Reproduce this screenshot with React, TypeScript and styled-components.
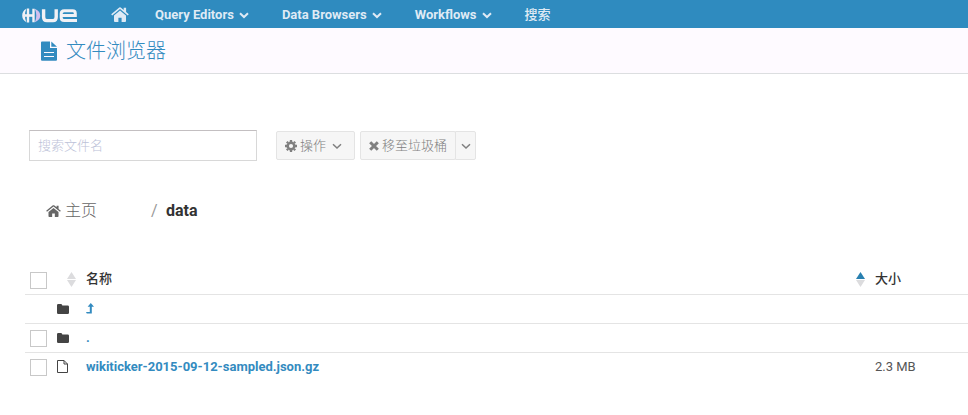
import React from "react";
import styled, { createGlobalStyle } from "styled-components";

const GlobalStyle = createGlobalStyle`
  *, *::before, *::after { box-sizing: border-box; }
  body {
    margin: 0;
    background: #fff;
    color: #333;
    font: 13px/20px Roboto, "Noto Sans CJK SC", sans-serif;
  }
  a { color: #338bc0; text-decoration: none; }
`;

const Navbar = styled.nav`
  display: flex;
  align-items: center;
  height: 28px;
  padding-left: 22px;
  background: #2f8bbf;
`;

const Brand = styled.a`
  display: flex;
  margin: 2px 33px 0 0;
`;

const HomeLink = styled.a`
  && { color: #dfeaf5; }
  display: flex;
  margin-right: 26px;
`;

const NavButton = styled.button`
  display: flex;
  align-items: center;
  gap: 5px;
  margin: 2px 33px 0 0;
  padding: 0;
  border: 0;
  background: none;
  color: #dfeaf5;
  font: 700 13px/20px Roboto, sans-serif;
`;

const NavLink = styled.a`
  && { color: #dfeaf5; }
  margin-top: 2px;
  font-size: 13px;
  font-weight: 500;
`;

const TitleBar = styled.header`
  display: flex;
  align-items: center;
  gap: 9px;
  height: 46px;
  padding-left: 41px;
  border-bottom: 1px solid #dcdee0;
  background: #fefaff;
  color: #338bc0;
`;

const Title = styled.h1`
  margin: 0;
  font-size: 20px;
  font-weight: 300;
  line-height: 28px;
`;

const Toolbar = styled.div`
  display: flex;
  align-items: center;
  padding: 56px 29px 0;
`;

const SearchInput = styled.input`
  width: 228px;
  height: 31px;
  margin-right: 19px;
  padding: 0 8px;
  border: 1px solid #d8d8d8;
  border-top-color: #c3bfc1;
  border-radius: 0;
  background: #fff;
  font: 300 13px/20px Roboto, "Noto Sans CJK SC", sans-serif;
  &::placeholder { color: #bcc2d8; opacity: 1; }
`;

const ToolButton = styled.button<{ $caret?: boolean }>`
  display: flex;
  align-items: center;
  gap: 3px;
  height: 29px;
  padding: ${(p) => (p.$caret ? "0 4px 0 5px" : "0 8px")};
  border: 1px solid #e4e4e4;
  border-radius: ${(p) => (p.$caret ? "0 2px 2px 0" : "2px")};
  background: #f6f6f6;
  color: #808080;
  font: 300 13px/18px Roboto, "Noto Sans CJK SC", sans-serif;
`;

const ActionLabel = styled.span`
  margin-right: 3px;
`;

const MenuButton = styled(ToolButton)`
  padding-right: 12px;
`;

const SplitButton = styled.div`
  display: flex;
  margin-left: 5px;
  & > button + button { margin-left: -1px; }
`;

const Breadcrumb = styled.nav`
  display: flex;
  align-items: center;
  height: 24px;
  margin: 38px 0 0 46px;
  font-size: 16px;
`;

const CrumbHome = styled.a`
  && { color: #666; }
  display: flex;
  align-items: center;
  gap: 4px;
  width: 105px;
  font-weight: 300;
`;

const Slash = styled.span`
  width: 15px;
  color: #999;
`;

const Current = styled.strong`
  color: #333;
  font-weight: 700;
`;

const FileTable = styled.table`
  width: calc(100% - 25px);
  margin: 42px 0 0 25px;
  border-collapse: collapse;
  table-layout: fixed;
  & th, & td {
    height: 29px;
    padding: 0 5px;
    text-align: left;
    vertical-align: middle;
    line-height: 20px;
  }
  & th { font-weight: 500; color: #333; }
  & td { border-top: 1px solid #e4e4e4; color: #555; }
  & svg { display: block; }
`;

const Col = styled.col<{ $w?: number }>`
  width: ${(p) => (p.$w ? `${p.$w}px` : "auto")};
`;

const Check = styled.input`
  display: block;
  appearance: none;
  width: 17px;
  height: 17px;
  margin: 2px 0 0;
  border: 1px solid #c8c8c8;
  background: #fff;
`;

const SortHead = styled.div`
  display: flex;
  align-items: center;
  justify-content: space-between;
`;

const IconSlot = styled.div`
  display: flex;
  justify-content: flex-end;
`;

const FileLink = styled.a`
  font-weight: 700;
`;

const Chevron = ({ weight = 2 }: { weight?: number }) => (
  <svg width="10" height="10" viewBox="0 0 10 10" fill="none" stroke="currentColor" strokeWidth={weight} aria-hidden="true">
    <path d="M1 3.2 5 7 9 3.2" />
  </svg>
);

const HomeIcon = ({ width, height }: { width: number; height: number }) => (
  <svg width={width} height={height} viewBox="0 0 18 15" preserveAspectRatio="none" fill="currentColor" aria-hidden="true">
    <path d="M9 3.6 15 8.6V14.1Q15 15 14.1 15H10.6V10.7H7.4V15H3.9Q3 15 3 14.1V8.6Z" />
    <path d="M8.3.4Q9 0 9.7.4L12.7 2.9V.8H15.1V4.9L17.8 7.2 16.8 8.4 9 2 1.2 8.4.2 7.2Z" />
  </svg>
);

const Logo = () => (
  <svg width="56" height="15" viewBox="0 0 56 15" fill="none" role="img" aria-label="Hue">
    <path d="M4.4.8C1.3 2.5.2 4.7.2 7.5S1.3 12.5 4.4 14.2Q2.9 11 2.9 7.5T4.4.8Z" fill="#f1f1f5" />
    <path d="M3 7.5H12" stroke="#f1f1f5" strokeWidth="2.6" />
    <path d="M6 .6V14.4M11.5 .8V14.2" stroke="#f1f1f5" strokeWidth="2.4" />
    <path d="M12.8.8C16.8 2.6 18.2 4.7 18.2 7.5S16.8 12.6 12.8 14.2Q14.3 11 14.3 7.5T12.8.8Z" fill="#d1bfee" />
    <path d="M21.6 1.2V9Q21.6 12.6 24.8 12.6H31Q34.2 12.6 34.2 9V1.2" stroke="#f1f1f5" strokeWidth="3.4" />
    <path d="M39.5 7.5H53.3V5.5Q53.3 2.8 50.6 2.8H42.2Q39.2 2.8 39.2 5.8V9.6Q39.2 12.6 42.2 12.6H55" stroke="#f1f1f5" strokeWidth="3" />
  </svg>
);

const DocumentIcon = () => (
  <svg width="16" height="20" viewBox="0 0 16 20" aria-hidden="true">
    <path d="M1 .5H9V7H16V18.7Q16 19.7 15 19.7H1Q0 19.7 0 18.7V1.5Q0 .5 1 .5ZM10.3.5 16 5.8H10.3Z" fill="currentColor" />
    <path d="M3 11.5H13M3 15.5H13" stroke="#fefaff" strokeWidth="1.2" />
  </svg>
);

const GearIcon = () => (
  <svg width="12" height="12" viewBox="0 0 12 12" aria-hidden="true">
    <circle cx="6" cy="6" r="3.3" fill="none" stroke="currentColor" strokeWidth="2.5" />
    <path d="M6 0V2M6 10V12M0 6H2M10 6H12M1.8 1.8 3 3M9 9 10.2 10.2M10.2 1.8 9 3M3 9 1.8 10.2" stroke="currentColor" strokeWidth="2.3" />
  </svg>
);

const CrossIcon = () => (
  <svg width="10" height="10" viewBox="0 0 10 10" stroke="currentColor" strokeWidth="3" aria-hidden="true">
    <path d="M1.2 1.2 8.8 8.8M8.8 1.2 1.2 8.8" />
  </svg>
);

const FolderIcon = () => (
  <svg width="12" height="10" viewBox="0 0 12 10" fill="#444" aria-hidden="true">
    <path d="M1.3 0H4Q5.3 0 5.3 1.5H10.7Q12 1.5 12 2.8V8.7Q12 10 10.7 10H1.3Q0 10 0 8.7V1.3Q0 0 1.3 0Z" />
  </svg>
);

const FileIcon = () => (
  <svg width="11" height="13" viewBox="0 0 11 13" fill="none" stroke="#444" aria-hidden="true">
    <path d="M.5.5H7L10.5 4V12.5H.5ZM7 .5V4H10.5" />
  </svg>
);

const UpIcon = () => (
  <svg width="8" height="11" viewBox="0 0 8 11" fill="#338bc0" aria-hidden="true">
    <path d="M4.8 0 8 3.8H5.8V10.5H.8L0 9H3.8V3.8H1.6Z" />
  </svg>
);

const SortIcon = ({ ascending = false }: { ascending?: boolean }) => (
  <svg width="9" height="15" viewBox="0 0 9 15" aria-hidden="true">
    <path d="M4.5 0 9 7H0Z" fill={ascending ? "#2980b0" : "#dcdcde"} />
    <path d="M0 8H9L4.5 15Z" fill="#dcdcde" />
  </svg>
);

const menus = ["Query Editors", "Data Browsers", "Workflows"];

export default function App() {
  return (
    <>
      <GlobalStyle />
      <Navbar>
        <Brand href="#"><Logo /></Brand>
        <HomeLink href="#" aria-label="主页"><HomeIcon width={18} height={15} /></HomeLink>
        {menus.map((menu) => (
          <NavButton key={menu} type="button">{menu}<Chevron /></NavButton>
        ))}
        <NavLink href="#">搜索</NavLink>
      </Navbar>
      <TitleBar>
        <DocumentIcon />
        <Title>文件浏览器</Title>
      </TitleBar>
      <main>
        <Toolbar>
          <SearchInput type="text" placeholder="搜索文件名" aria-label="搜索文件名" />
          <MenuButton type="button"><GearIcon /><ActionLabel>操作</ActionLabel><Chevron weight={1.5} /></MenuButton>
          <SplitButton>
            <ToolButton type="button"><CrossIcon />移至垃圾桶</ToolButton>
            <ToolButton type="button" $caret aria-label="更多"><Chevron weight={1.5} /></ToolButton>
          </SplitButton>
        </Toolbar>
        <Breadcrumb>
          <CrumbHome href="#"><HomeIcon width={15} height={12} />主页</CrumbHome>
          <Slash>/</Slash>
          <Current>data</Current>
        </Breadcrumb>
        <FileTable>
          <colgroup>
            <Col $w={27} /><Col $w={29} /><Col /><Col $w={98} />
          </colgroup>
          <thead>
            <tr>
              <th><Check type="checkbox" aria-label="全选" /></th>
              <th><IconSlot><SortIcon /></IconSlot></th>
              <th><SortHead>名称<SortIcon ascending /></SortHead></th>
              <th>大小</th>
            </tr>
          </thead>
          <tbody>
            <tr>
              <td />
              <td><FolderIcon /></td>
              <td><FileLink href="#" aria-label="上一级"><UpIcon /></FileLink></td>
              <td />
            </tr>
            <tr>
              <td><Check type="checkbox" aria-label="选择 ." /></td>
              <td><FolderIcon /></td>
              <td><FileLink href="#">.</FileLink></td>
              <td />
            </tr>
            <tr>
              <td><Check type="checkbox" aria-label="选择 wikiticker-2015-09-12-sampled.json.gz" /></td>
              <td><FileIcon /></td>
              <td><FileLink href="#">wikiticker-2015-09-12-sampled.json.gz</FileLink></td>
              <td>2.3 MB</td>
            </tr>
          </tbody>
        </FileTable>
      </main>
    </>
  );
}
